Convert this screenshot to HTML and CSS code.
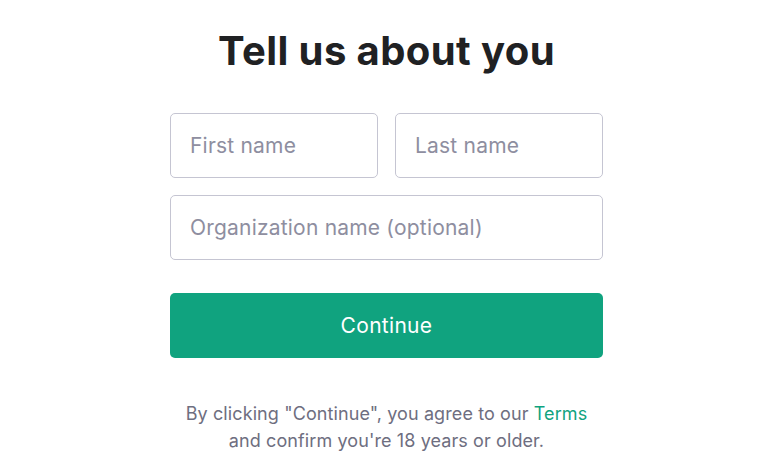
FILE: index.html
```html
<!DOCTYPE html>
<html lang="en">
<head>
    <meta charset="UTF-8">
    <meta name="viewport" content="width=device-width, initial-scale=1.0">
    <title>Tell us about you</title>
    <link rel="stylesheet" href="styles.css">
</head>
<body>

    <div class="about-box">
        <h1 class="title">Tell us about you</h1>

        <!-- Name fields -->
        <div class="name-row">
            <input class="field" type="text" placeholder="First name">
            <input class="field" type="text" placeholder="Last name">
        </div>
        <input class="field" type="text" placeholder="Organization name (optional)">

        <button class="continue-btn">Continue</button>

        <p class="terms">By clicking "Continue", you agree to our <a href="#">Terms</a><br>and confirm you're 18 years or older.</p>
    </div>

</body>
</html>
```

FILE: styles.css
```css
/* Page */
body {
    margin: 0;
    background-color: #ffffff;
    font-family: Inter, "Noto Sans", sans-serif;
    color: #202123;
}

.about-box {
    width: 433px;
    margin-left: 170px;
    padding-top: 27px;
    display: flex;
    flex-direction: column;
    gap: 17px;
}

.title {
    margin: 0 0 21px;
    font-size: 40px;
    font-weight: 700;
    text-align: center;
    letter-spacing: 0.4px;
    line-height: 48px;
}

.name-row {
    display: flex;
    gap: 17px;
}

.name-row .field {
    flex: 1;
    min-width: 0;
}

.field {
    box-sizing: border-box;
    height: 65px;
    padding: 0 19px;
    border: 1px solid #c5c5d2;
    border-radius: 5px;
    font-family: inherit;
    font-size: 21px;
    letter-spacing: 0.2px;
    color: #202123;
    outline: none;
}

.field::placeholder {
    color: #8e8ea0;
}

.continue-btn {
    margin-top: 16px;
    height: 65px;
    border: none;
    border-radius: 5px;
    background-color: #10a37f;
    color: #ffffff;
    font-family: inherit;
    font-size: 21px;
    letter-spacing: 0.3px;
    cursor: pointer;
}

.terms {
    margin: 25px 0 0;
    font-size: 18px;
    letter-spacing: 0.1px;
    line-height: 27px;
    color: #6e6e80;
    text-align: center;
}

.terms a {
    color: #10a37f;
    text-decoration: none;
}
```
